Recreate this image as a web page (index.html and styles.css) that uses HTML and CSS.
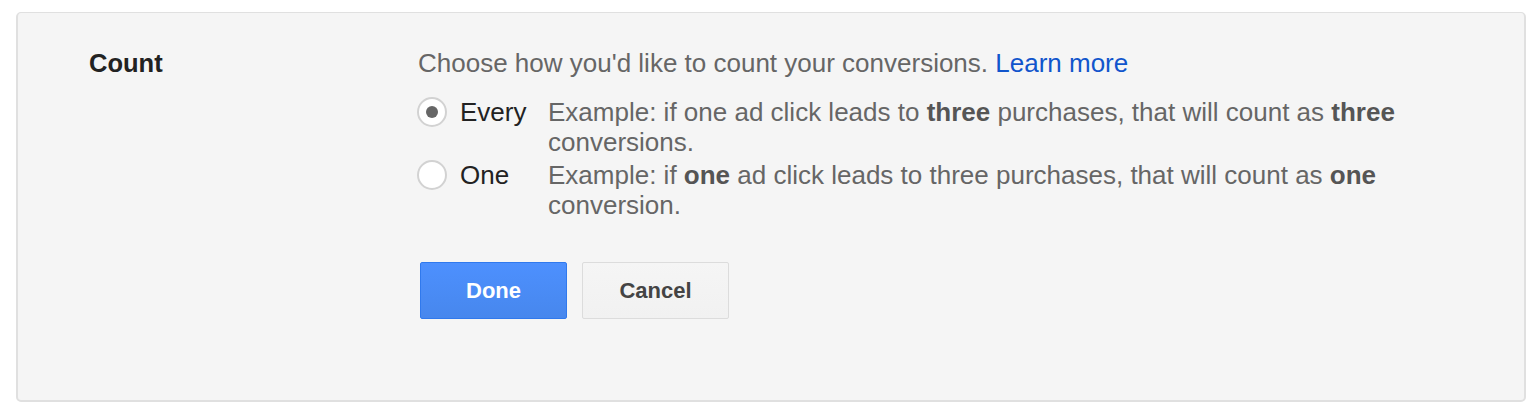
FILE: index.html
```html
<!DOCTYPE html>
<html>
<head>
<meta charset="utf-8">
<link rel="stylesheet" href="styles.css">
</head>
<body>
<div class="panel">
  <div class="label">Count</div>
  <div class="content">
    <p class="intro">Choose how you'd like to count your conversions. <a href="#" class="link">Learn more</a></p>
    <div class="options">
      <div class="option">
        <span class="radio checked"></span>
        <span class="opt-name">Every</span>
        <span class="opt-desc">Example: if one ad click leads to <b>three</b> purchases, that will count as <b>three</b> conversions.</span>
      </div>
      <div class="option">
        <span class="radio"></span>
        <span class="opt-name">One</span>
        <span class="opt-desc">Example: if <b>one</b> ad click leads to three purchases, that will count as <b>one</b> conversion.</span>
      </div>
    </div>
    <div class="buttons">
      <button class="btn primary">Done</button>
      <button class="btn">Cancel</button>
    </div>
  </div>
</div>
</body>
</html>
```
FILE: styles.css
```css
* { box-sizing: border-box; }
html, body { margin: 0; padding: 0; background: #fff; }
body {
  font-family: "Liberation Sans", Arial, sans-serif;
  padding: 12px 14px 0 16px;
}
.panel {
  width: 1510px;
  height: 390px;
  background: #f5f5f5;
  border: 2px solid #e0e0e0;
  border-top-width: 1.5px;
  border-radius: 5px;
  display: grid;
  grid-template-columns: 329px 1fr;
  padding: 35px 40px 0 71px;
}
.label {
  font-weight: bold;
  font-size: 25.5px;
  color: #222;
  line-height: 30px;
}
.content {
  font-size: 26px;
  color: #666;
  line-height: 30px;
}
.intro { margin: 0 0 19px 0; }
.link { color: #1155cc; text-decoration: none; }
.options { display: flex; flex-direction: column; gap: 3px; }
.option {
  display: grid;
  grid-template-columns: 42px 88px 1fr;
  align-items: start;
}
.radio {
  width: 30px; height: 30px;
  border: 2px solid #d2d2d2;
  border-radius: 50%;
  background: #fff;
  margin-top: 0;
  margin-left: -1px;
  position: relative;
}
.radio.checked::after {
  content: "";
  position: absolute;
  left: 7px; top: 7px;
  width: 12px; height: 12px;
  border-radius: 50%;
  background: #666;
}
.opt-name { color: #222; }
.opt-desc { max-width: 870px; }
.opt-desc b { color: #555; }
.buttons { display: flex; gap: 15px; margin-top: 42px; padding-left: 2px; }
.btn {
  width: 147px; height: 57px;
  font-family: "Liberation Sans", Arial, sans-serif;
  font-weight: bold;
  font-size: 22px;
  border-radius: 2px;
  border: 1px solid #dcdcdc;
  background: linear-gradient(#f5f5f5, #f1f1f1);
  color: #444;
}
.btn.primary {
  border-color: #3079ed;
  background: linear-gradient(#4d90fe, #4787ed);
  color: #fff;
}
```
